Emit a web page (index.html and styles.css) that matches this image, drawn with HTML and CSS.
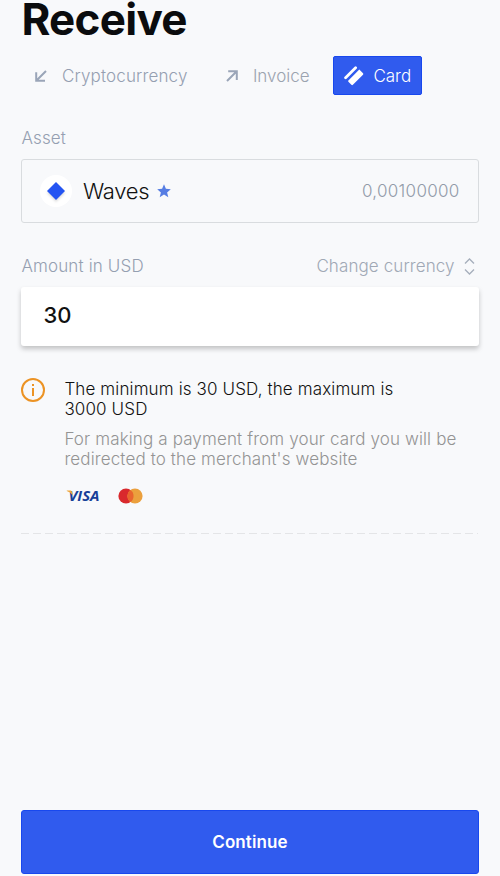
FILE: index.html
```html
<!DOCTYPE html>
<html lang="en">
<head>
<meta charset="utf-8">
<title>Receive</title>
<link rel="stylesheet" href="styles.css">
</head>
<body>
<main class="screen">
  <h1 class="title">Receive</h1>
  <nav class="tabs">
    <a class="tab tab-crypto">
      <svg class="arrow" viewBox="0 0 12 12"><path d="M11 1 2 10M1.2 2.2V10.8H10"/></svg>
      <span>Cryptocurrency</span>
    </a>
    <a class="tab tab-invoice">
      <svg class="arrow" viewBox="0 0 12 12"><path d="M1 11 10 2M2.2 1.2H10.8V10"/></svg>
      <span>Invoice</span>
    </a>
    <a class="tab tab-card">
      <svg class="card-icon" viewBox="0 0 20 20"><path d="M1.6 11.8 11.6 1.8" stroke="#fff" stroke-width="2.8" stroke-linecap="round"/><path d="M4.4 14.5 15.3 3.6 19 7.2Q19.7 8 19 8.7L8.9 18.8Q8.2 19.5 7.4 18.8L4.4 15.8Q3.8 15.1 4.4 14.5Z" fill="#fff"/></svg>
      <span>Card</span>
    </a>
  </nav>
  <div class="label asset-label">Asset</div>
  <section class="asset">
    <span class="coin"><svg viewBox="0 0 18 18"><path d="M9 0 18 9 9 18 0 9Z"/></svg></span>
    <span class="asset-name">Waves</span>
    <svg class="star" viewBox="0 0 14 14"><path d="M7 .3 8.9 4.8 13.8 5.2 10.1 8.4 11.3 13.2 7 10.6 2.7 13.2 3.9 8.4.2 5.2 5.1 4.8Z"/></svg>
    <span class="balance">0,00100000</span>
  </section>
  <div class="amount-head">
    <span class="label amount-label">Amount in USD</span>
    <span class="change">Change currency</span>
    <svg class="chevrons" viewBox="0 0 11 17"><path d="M1 5.5 5.5 1 10 5.5M1 11.5 5.5 16 10 11.5"/></svg>
  </div>
  <div class="amount">30</div>
  <section class="notice">
    <svg class="info" viewBox="0 0 24 24"><circle cx="12" cy="12" r="11"/><path d="M12 10V18M12 6V8"/></svg>
    <div class="notice-body">
      <p class="limits">The minimum is 30 USD, the maximum is<br>3000 USD</p>
      <p class="hint">For making a payment from your card you will be<br>redirected to the merchant's website</p>
      <div class="brands">
        <svg class="visa" viewBox="0 0 34 16"><text x="2.5" y="13.3" textLength="31" lengthAdjust="spacingAndGlyphs">VISA</text><path d="M.8 2.6H4.4Q5.8 2.6 6.1 4.1L6.9 7.6Q4.8 4.1 .8 3Z" fill="#eda63a"/></svg>
        <svg class="mastercard" viewBox="0 0 25 16"><circle cx="8" cy="8" r="7.6" fill="#d9292d"/><circle cx="17" cy="8" r="7.6" fill="#eba03d"/><path d="M12.5 1.9A7.6 7.6 0 0 1 12.5 14.1 7.6 7.6 0 0 1 12.5 1.9Z" fill="#e9642e"/></svg>
      </div>
    </div>
  </section>
  <hr class="divider">
  <button class="continue">Continue</button>
</main>
</body>
</html>
```
FILE: styles.css
```css
* { box-sizing: border-box; }
body {
  margin: 0;
  background: #f8f9fb;
  font-family: Inter, "Liberation Sans", sans-serif;
  font-weight: 300;
  color: #111;
}
.screen {
  height: 876px;
  padding: 0 21.4px 2px;
  display: flex;
  flex-direction: column;
}
.title {
  margin: 0 0 18px;
  font-size: 44px;
  line-height: 38px;
  font-weight: 700;
  letter-spacing: -0.7px;
  color: #0b0c0e;
}
.tabs { display: flex; height: 39px; flex: none; }
.tab {
  display: flex;
  align-items: center;
  font-size: 17px;
  color: #959fb1;
  white-space: nowrap;
}
.tab-crypto { width: 191px; padding-left: 13.5px; gap: 15px; letter-spacing: 0.15px; }
.tab-invoice { width: 121px; padding-left: 13.5px; gap: 15px; color: #9ba3af; }
.tab-card {
  width: 89px;
  padding-left: 9.5px;
  gap: 9.5px;
  background: #305bee;
  border: 1px solid #1848ee;
  border-radius: 2px;
  color: #fff;
}
.arrow { width: 12px; height: 12px; fill: none; stroke: #9aa5b8; stroke-width: 2; }
.card-icon { width: 20px; height: 20px; fill: none; }
.label { font-size: 17px; line-height: 22px; color: #959fb1; letter-spacing: 0.15px; }
.asset-label { margin: 32px 0 10px; }
.asset {
  display: flex;
  align-items: center;
  height: 64px;
  flex: none;
  padding: 0 18px 0 17.5px;
  border: 1px solid #d9dcdf;
  border-radius: 3px;
}
.coin {
  display: flex;
  align-items: center;
  justify-content: center;
  width: 32px;
  height: 32px;
  border-radius: 50%;
  background: #fff;
}
.coin svg { width: 18px; height: 18px; fill: #2454f2; filter: drop-shadow(0 2px 1px #0002); overflow: visible; }
.asset-name { margin-left: 11px; font-size: 22px; letter-spacing: -0.25px; }
.star { width: 14px; height: 14px; margin-left: 7.5px; fill: #567de3; }
.balance { margin-left: auto; font-size: 17px; letter-spacing: 0.3px; color: #929ba9; }
.amount-head { display: flex; align-items: center; height: 22px; margin: 32px 0 10px; flex: none; }
.change { margin-left: auto; font-size: 17px; letter-spacing: 0.1px; color: #a0a8b5; }
.chevrons { width: 11px; height: 17px; margin: 0 4px 0 9px; fill: none; stroke: #a6aebb; stroke-width: 1.3; }
.amount {
  height: 59px;
  flex: none;
  padding-left: 22px;
  background: #fff;
  border-radius: 3px;
  box-shadow: 0 3px 5px #00000038;
  font-size: 22px;
  line-height: 57px;
  font-weight: 500;
}
.notice { display: flex; gap: 19px; margin-top: 32px; }
.info { width: 24px; height: 24px; flex: none; fill: none; stroke: #ec9324; stroke-width: 2; }
.notice-body { white-space: nowrap; padding-top: 0.5px; }
.limits, .hint { margin: 0; font-size: 17px; line-height: 20.5px; letter-spacing: 0.13px; }
.hint { margin-top: 9px; color: #949494; }
.brands { display: flex; gap: 18px; margin-top: 18.5px; padding-left: 2px; }
.visa { width: 34px; height: 16px; overflow: visible; }
.visa text { font: italic 700 14.5px "Open Sans", sans-serif; fill: #173f98; }
.mastercard { width: 25px; height: 16px; }
.divider {
  width: 457px;
  height: 1px;
  flex: none;
  margin: 29px 0 0;
  border: 0;
  background: repeating-linear-gradient(90deg, #e4e5e7 0 8px, transparent 8px 12px);
}
.continue {
  height: 64px;
  flex: none;
  margin-top: auto;
  border: 1px solid #1848ee;
  border-radius: 3px;
  background: #305bee;
  color: #fff;
  font: 600 17px Inter, sans-serif;
  letter-spacing: 0.1px;
}
```
